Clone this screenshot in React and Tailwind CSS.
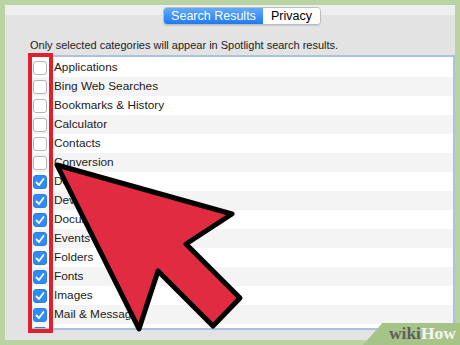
import React from 'react';

const rows = [
  { name: 'Applications', on: false },
  { name: 'Bing Web Searches', on: false },
  { name: 'Bookmarks & History', on: false },
  { name: 'Calculator', on: false },
  { name: 'Contacts', on: false },
  { name: 'Conversion', on: false },
  { name: 'Definition', on: true },
  { name: 'Developer', on: true },
  { name: 'Documents', on: true },
  { name: 'Events & Reminders', on: true },
  { name: 'Folders', on: true },
  { name: 'Fonts', on: true },
  { name: 'Images', on: true },
  { name: 'Mail & Messages', on: true },
  { name: 'Movies', on: true },
];

const Checkbox = ({ on }) =>
  on ? (
    <span className="w-[14px] h-[14px] rounded-[3px] bg-[#2f8bf6] border border-[#2a7fe8] flex items-center justify-center shrink-0">
      <svg width="12" height="12" viewBox="0 0 12 12">
        <path d="M2.5 6.5 L5 9 L9.5 3" fill="none" stroke="#fff" strokeWidth="1.8" strokeLinecap="round" strokeLinejoin="round" />
      </svg>
    </span>
  ) : (
    <span className="w-[14px] h-[14px] rounded-[3px] bg-white border border-[#b5b5b5] shrink-0" />
  );

const App = () => {
  return (
    <div className="relative w-[460px] h-[345px] bg-[#b9d3a2] p-[5px] overflow-hidden font-['Liberation_Sans',Arial,sans-serif]">
      {/* Window */}
      <div className="h-full bg-[#e3e3e3] flex flex-col">
        {/* Tabs */}
        <div className="h-[22px] pt-[2px] bg-[linear-gradient(#eeeeee_0_10px,#e3e3e3_10px)]">
          <div className="ml-[158px] w-[158px] h-[18px] flex rounded-[4px] border border-[#bdbdbd] overflow-hidden shadow-[0_1px_1px_rgba(0,0,0,0.12)] text-[12.5px] leading-none">
            <div className="w-[99px] flex items-center justify-center text-white bg-[linear-gradient(#62abfb,#1f7af1)]">Search Results</div>
            <div className="flex-1 flex items-center justify-center text-black bg-white">Privacy</div>
          </div>
        </div>

        <p className="mt-[12px] pl-[25px] text-[11px] leading-[13px] text-[#222]">
          Only selected categories will appear in Spotlight search results.
        </p>

        {/* List */}
        <div className="mt-[3px] ml-[24px] h-[275px] pt-[1px] bg-white border-t-2 border-b-2 border-r-2 border-l border-[#a8c2df] border-l-[#c8c8c8] overflow-hidden">
          {rows.map((r, i) => (
            <div
              key={r.name}
              className={`h-[19px] flex items-center gap-[7px] pl-[3px] text-[11.8px] text-[#1a1a1a] ${i % 2 ? 'bg-[#f4f4f4]' : 'bg-white'}`}
            >
              <Checkbox on={r.on} />
              <span>{r.name}</span>
            </div>
          ))}
        </div>
      </div>

      {/* Annotation: highlight box + arrow */}
      <svg className="absolute inset-0 pointer-events-none" width="460" height="345" viewBox="0 0 460 345">
        <rect x="30" y="55" width="21" height="276" fill="none" stroke="#e0202d" strokeWidth="4" />
        <polygon
          points="57,165 232,214 186,244 240,298 213,326 158,271 139,329"
          fill="#e12b40"
          stroke="#000"
          strokeWidth="5"
          strokeLinejoin="round"
        />
      </svg>

      {/* Watermark */}
      <div className="absolute right-0 bottom-0 w-[97px] h-[22px] bg-[#a6c488] [clip-path:polygon(20%_0,100%_0,100%_100%,0_100%)] flex items-center justify-end pr-[4px] font-['Liberation_Serif',serif] font-bold text-[17.5px] leading-none">
        <span className="text-[#5e5e5e]">wiki</span>
        <span className="text-[#f5f5f5]">How</span>
      </div>
    </div>
  );
};

export default App;
